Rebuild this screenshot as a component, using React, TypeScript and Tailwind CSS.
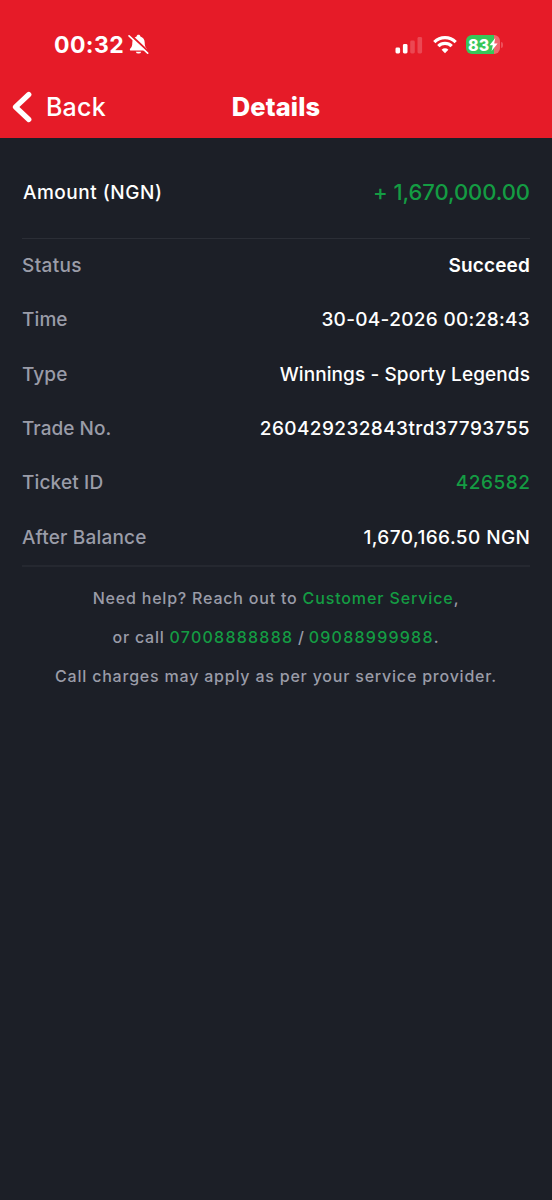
import React from "react";

type Row = { label: string; value: string; labelClass: string; valueClass: string };

const rows: Row[] = [
  { label: "Status", value: "Succeed", labelClass: "tracking-[0.37px]", valueClass: "font-semibold tracking-[0.15px]" },
  { label: "Time", value: "30-04-2026 00:28:43", labelClass: "tracking-[0.1px]", valueClass: "tracking-[0.31px]" },
  { label: "Type", value: "Winnings - Sporty Legends", labelClass: "tracking-[0.1px]", valueClass: "tracking-[0.09px]" },
  { label: "Trade No.", value: "260429232843trd37793755", labelClass: "tracking-[0.04px]", valueClass: "tracking-[0.41px]" },
  { label: "Ticket ID", value: "426582", labelClass: "tracking-[0.15px]", valueClass: "tracking-[0.5px] -mr-[0.4px] text-[#149c43]" },
  { label: "After Balance", value: "1,670,166.50 NGN", labelClass: "tracking-[0.18px]", valueClass: "tracking-[0.42px] -mr-[0.4px]" },
];

function BellOff() {
  return (
    <svg className="ml-1 h-[21px] w-[21px]" viewBox="0 0 20 20" fill="none">
      <path d="M10 0.8c-1 0-1.7.6-1.8 1.500C5.500 3.200 4.100 5.300 4.100 8c0 3.300-.6 4.300-1.900 5.700-.9 1-.4 2.100.8 2.100h14c1.200 0 1.700-1.100.8-2.100-1.300-1.400-1.900-2.400-1.900-5.700 0-2.700-1.400-4.800-4.100-5.700C11.700 1.400 11 .8 10 .8Z" fill="white" />
      <path d="M7.400 16.900a2.700 2.400 0 0 0 5.200 0Z" fill="white" />
      <path d="M2.400 1 20 17.500" stroke="#e61b28" strokeWidth="2.200" />
      <path d="M1 1.700 18.700 18.300" stroke="white" strokeWidth="1.600" strokeLinecap="round" />
    </svg>
  );
}

function Signal() {
  return (
    <svg className="h-[18px] w-7" viewBox="0 0 28 18">
      <rect x="0.500" y="11.500" width="4.600" height="6" rx="1.400" fill="white" />
      <rect x="7.900" y="8" width="4.600" height="9.500" rx="1.400" fill="white" />
      <rect x="15.200" y="4.500" width="4.600" height="13" rx="1.400" fill="white" opacity="0.200" />
      <rect x="22.500" y="1" width="4.600" height="16.500" rx="1.400" fill="white" opacity="0.200" />
    </svg>
  );
}

function Wifi() {
  return (
    <svg className="h-[18px] w-6" viewBox="0 0 24 18" fill="none" stroke="white" strokeWidth="3.200">
      <path d="M1.300 6.100a15.200 15.200 0 0 1 21.400 0" />
      <path d="M5.300 10.200a9.500 9.500 0 0 1 13.400 0" />
      <path d="M12 17.200 8.600 13.700a4.900 4.900 0 0 1 6.800 0Z" fill="white" stroke="none" />
    </svg>
  );
}

function Battery() {
  return (
    <div className="flex items-center gap-px">
      <div className="flex h-[19px] w-[34px] items-center overflow-hidden rounded-[6px] bg-linear-to-r from-[#36c759] from-83% to-[#f0656d] to-83% pl-[2px]">
        <span className="text-[16px] leading-none font-extrabold tracking-[0.100px]">83</span>
        <svg className="h-[15px] w-[9px] shrink-0" viewBox="0 0 9 14">
          <path d="M6.300.5.500 7.700h3.300L2.600 13.500 8.600 6H5.200Z" fill="white" />
        </svg>
      </div>
      <div className="h-[6px] w-[2px] rounded-r bg-[#ee4f59]" />
    </div>
  );
}

export default function App() {
  return (
    <div className="flex h-[1200px] w-[552px] flex-col bg-[#1c1f27] font-['Inter',sans-serif] text-white">
      <header className="h-[138px] bg-[#e61b28]">
        <div className="flex h-[87px] items-center justify-between pt-[2px] pr-[49px] pl-[54px]">
          <div className="flex items-center">
            <span className="pt-[2px] text-[23px] font-bold tracking-[0.4px]">00:32</span>
            <BellOff />
          </div>
          <div className="flex items-center gap-[9.500px]">
            <Signal />
            <Wifi />
            <Battery />
          </div>
        </div>
        <div className="grid h-[38px] grid-cols-3 items-center">
          <div className="flex items-center pl-[12px]">
            <svg className="h-8 w-5" viewBox="0 0 20 32" fill="none">
              <path d="M16.800 3.500 3.500 16l13.300 12.500" stroke="white" strokeWidth="5.200" strokeLinecap="round" strokeLinejoin="round" />
            </svg>
            <span className="ml-[14px] pt-[2px] text-[25px] font-[450] tracking-[0.2px]">Back</span>
          </div>
          <h1 className="pt-[1px] text-center text-[25.5px] font-extrabold tracking-[0.15px]">Details</h1>
        </div>
      </header>
      <main className="px-[22px] text-[19px] font-[550]">
        <div className="flex h-[101px] items-center justify-between border-b border-[#2b2e36] pt-[9px]">
          <span className="pt-px pl-px tracking-[0.500px]">Amount (NGN)</span>
          <span className="pb-px text-[22px] font-medium tracking-[-0.080px] text-[#149c43]">+ 1,670,000.00</span>
        </div>
        <dl className="h-[328px] border-b-2 border-[#252830]">
          {rows.map((r) => (
            <div key={r.label} className="flex h-[54.350px] items-center justify-between">
              <dt className={`text-[#9a9ca8] ${r.labelClass}`}>{r.label}</dt>
              <dd className={r.valueClass}>{r.value}</dd>
            </div>
          ))}
        </dl>
        <div className="mt-[12px] text-center text-[16px] leading-[39px] tracking-[0.790px] text-[#9a9ca8]">
          <p>Need help? Reach out to <span className="tracking-[0.880px] text-[#149c43]">Customer Service</span>,</p>
          <p><span className="tracking-[0.75px]">or call </span><span className="tracking-[1.250px] text-[#149c43]">07008888888</span><span className="tracking-[0.3px]"> / </span><span className="tracking-[1.250px] text-[#149c43]">09088999988</span>.</p>
          <p>Call charges may apply as per your service provider.</p>
        </div>
      </main>
    </div>
  );
}
